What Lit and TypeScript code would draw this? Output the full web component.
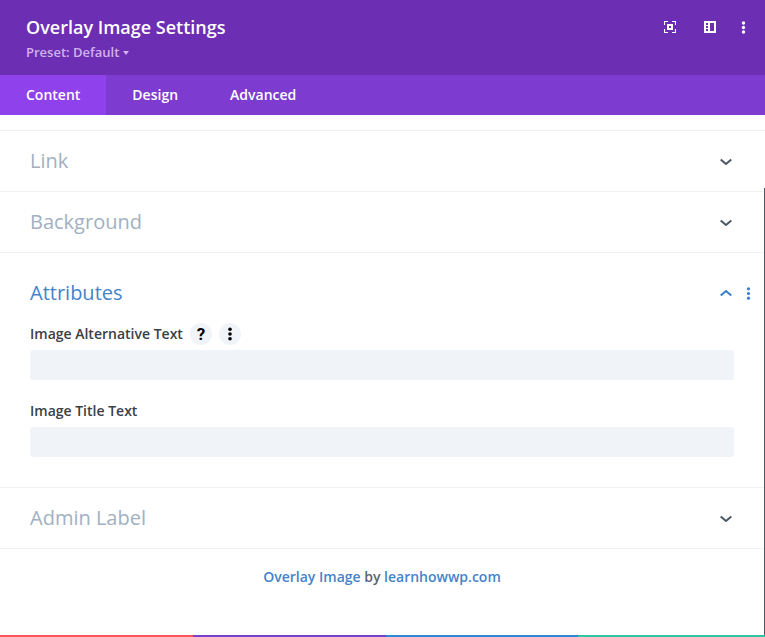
import { LitElement, html, css, svg, nothing } from "lit";
import { customElement, property } from "lit/decorators.js";

@customElement("settings-section")
class SettingsSection extends LitElement {
  @property() heading = "";
  @property({ type: Boolean, reflect: true }) open = false;

  static styles = css`
    :host {
      display: block;
      box-sizing: border-box;
      border-bottom: 1px solid #f0f3f5;
      height: 61px;
    }
    :host([open]) {
      height: 235px;
      padding-top: 10px;
    }
    .head {
      display: flex;
      align-items: center;
      height: 60px;
      padding: 0 12px 0 30px;
      color: #a2b0c1;
    }
    .open {
      color: #4583cb;
    }
    .title {
      flex: 1;
      font-size: 20px;
      line-height: 28px;
    }
    .arrow {
      display: block;
      width: 12px;
      height: 8px;
      margin-right: 14px;
      color: #4c5866;
    }
    .open .arrow {
      color: #3b7fc9;
    }
    .dots {
      display: block;
      width: 7px;
      height: 14px;
    }
    .space {
      width: 7px;
    }
    .body {
      padding: 0 31px 0 30px;
    }
  `;

  render() {
    return html`
      <div class="head ${this.open ? "open" : ""}">
        <div class="title">${this.heading}</div>
        <svg class="arrow" viewBox="0 0 12 8" fill="none" stroke="currentColor" stroke-width="2">
          <path d=${this.open ? "M0.7 6.6L6 2L11.3 6.6" : "M0.7 2.4L6 7L11.3 2.4"} />
        </svg>
        ${this.open
          ? html`<svg class="dots" viewBox="0 0 7 14" fill="#3b7fc9">
              <circle cx="2.5" cy="2.8" r="1.6" />
              <circle cx="2.5" cy="7.5" r="1.6" />
              <circle cx="2.5" cy="12.2" r="1.6" />
            </svg>`
          : html`<span class="space"></span>`}
      </div>
      ${this.open ? html`<div class="body"><slot></slot></div>` : nothing}
    `;
  }
}

@customElement("app-root")
class AppRoot extends LitElement {
  static styles = css`
    :host {
      display: flex;
      flex-direction: column;
      position: relative;
      width: 765px;
      height: 637px;
      overflow: hidden;
      background: #fff;
      font-family: "Open Sans", sans-serif;
    }
    .header {
      display: flex;
      justify-content: space-between;
      box-sizing: border-box;
      height: 75px;
      padding: 16px 19px 0 26px;
      background: #6c2eb3;
      color: #fff;
    }
    .name {
      font-size: 18px;
      font-weight: 600;
      line-height: 22px;
    }
    .preset {
      display: flex;
      align-items: center;
      margin-top: 5px;
      font-size: 13px;
      font-weight: 600;
      line-height: 18px;
      color: #d0b3ee;
    }
    .caret {
      margin: 1px 0 0 4px;
      border: 3px solid transparent;
      border-top: 4px solid #d0b3ee;
      border-bottom: 0;
    }
    .tools {
      display: flex;
      align-items: flex-start;
      padding-top: 5px;
    }
    .tools svg {
      display: block;
    }
    .focus {
      margin-right: 28px;
    }
    .panel {
      margin-right: 25px;
    }
    .tabs {
      display: flex;
      height: 40px;
      background: #7e3bd0;
      color: #fff;
      font-size: 14px;
      font-weight: 600;
      line-height: 40px;
    }
    .tab {
      padding: 0 26px;
    }
    .active {
      background: #8f42ec;
    }
    .content {
      flex: 1;
      padding-top: 15px;
    }
    .list {
      border-top: 1px solid #f0f3f5;
    }
    .label {
      display: flex;
      align-items: center;
      height: 22px;
      margin-bottom: 5px;
      font-size: 14px;
      font-weight: 600;
      color: #3a4046;
    }
    .text {
      margin: -2px 7px 0 0;
    }
    .round {
      display: flex;
      align-items: center;
      justify-content: center;
      width: 22px;
      height: 22px;
      margin-right: 7px;
      border-radius: 50%;
      background: #f0f3f8;
      color: #000;
    }
    .round svg {
      display: block;
    }
    .field {
      height: 30px;
      margin-bottom: 20px;
      border-radius: 3px;
      background: #f0f3f8;
    }
    .help {
      font-family: Roboto, sans-serif;
      font-size: 17px;
      font-weight: 700;
      line-height: 22px;
    }
    .credit {
      margin: 18px 1px 0 0;
      text-align: center;
      font-size: 14px;
      font-weight: 600;
      line-height: 20px;
      color: #5c6570;
    }
    .link {
      color: #4583cb;
    }
    .edge {
      position: absolute;
      top: 188px;
      right: 0;
      bottom: 2px;
      width: 1px;
      background: #4c5866;
    }
    .stripe {
      display: grid;
      grid-template-columns: 193px 193px 192px 1fr;
      height: 2px;
    }
    .red {
      background: #f9555b;
    }
    .purple {
      background: #7b40ca;
    }
    .blue {
      background: #2e89d5;
    }
    .green {
      background: #30c3a5;
    }
  `;

  render() {
    return html`
      <div class="header">
        <div>
          <div class="name">Overlay Image Settings</div>
          <div class="preset">Preset: Default<span class="caret"></span></div>
        </div>
        <div class="tools">
          <svg class="focus" width="12" height="12" viewBox="0 0 12 12" fill="none" stroke="#fff">
            <path d="M0.5 4V0.5H4M8 0.5H11.5V4M11.5 8V11.5H8M4 11.5H0.5V8" stroke-width="1.2" />
            <path d="M4 4H8V8H4Z" stroke-width="2" />
          </svg>
          <svg class="panel" width="12" height="12" viewBox="0 0 12 12">
            <path
              fill="#fff"
              fill-rule="evenodd"
              d="M0 0H12V12H0ZM6 2V10H10V2ZM2 2V4H4V2ZM2 5V7H4V5ZM2 8V10H4V8Z"
            />
          </svg>
          <svg width="5" height="13" viewBox="0 0 5 13" fill="#fff">
            ${[2, 6.5, 11].map((y) => svg`<circle cx="2.5" cy=${y} r="1.7" />`)}
          </svg>
        </div>
      </div>
      <div class="tabs">
        <div class="tab active">Content</div>
        <div class="tab">Design</div>
        <div class="tab">Advanced</div>
      </div>
      <div class="content">
        <div class="list">
          <settings-section heading="Link"></settings-section>
          <settings-section heading="Background"></settings-section>
          <settings-section heading="Attributes" open>
            <div class="label">
              <span class="text">Image Alternative Text</span>
              <span class="round help">?</span>
              <span class="round">
                <svg width="4" height="14" viewBox="0 0 4 14">
                  ${[2.2, 7, 11.8].map((y) => svg`<circle cx="2" cy=${y} r="1.8" />`)}
                </svg>
              </span>
            </div>
            <div class="field"></div>
            <div class="label"><span class="text">Image Title Text</span></div>
            <div class="field"></div>
          </settings-section>
          <settings-section heading="Admin Label"></settings-section>
        </div>
        <div class="credit">
          <span class="link">Overlay Image</span> by <span class="link">learnhowwp.com</span>
        </div>
      </div>
      <div class="stripe">
        <div class="red"></div>
        <div class="purple"></div>
        <div class="blue"></div>
        <div class="green"></div>
      </div>
      <div class="edge"></div>
    `;
  }
}
